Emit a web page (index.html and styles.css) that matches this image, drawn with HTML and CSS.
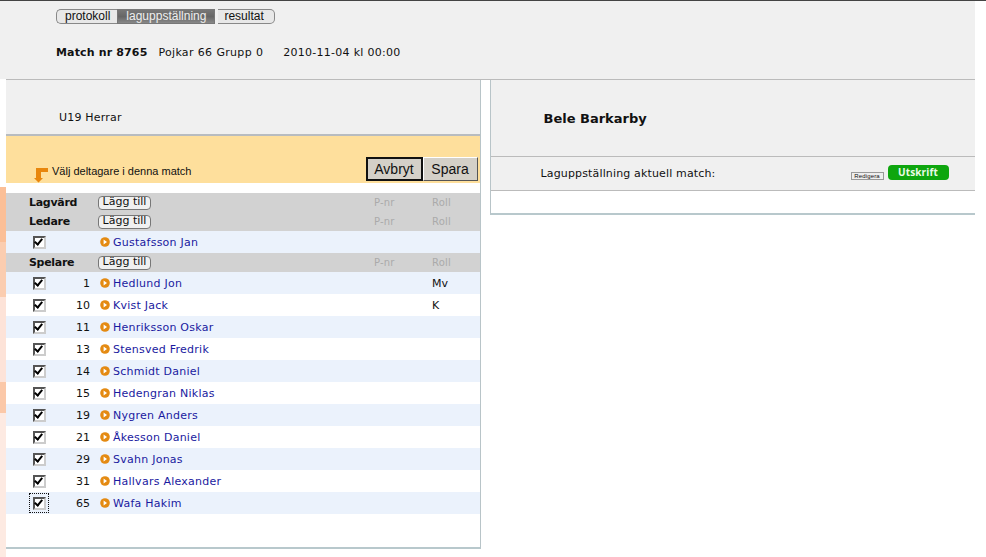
FILE: index.html
```html
<!DOCTYPE html>
<html>
<head>
    <title>Laguppställning</title>
    <link rel="stylesheet" href="styles.css">
</head>
<body>
    <div class="sidestrip">
        <div class="strip-top"></div>
        <div class="strip-gap"></div>
        <div class="strip-a"></div>
        <div class="strip-b"></div>
        <div class="strip-c"></div>
        <div class="strip-d"></div>
        <div class="strip-e"></div>
    </div>
    <div class="page">
        <div id="header">
            <div class="tabs">
                <a class="tab tab-first">protokoll</a>
                <a class="tab tab-active">laguppställning</a>
                <a class="tab tab-last">resultat</a>
            </div>
            <div class="matchinfo">
                <b>Match nr 8765</b>
                <span class="grupp">Pojkar 66 Grupp 0</span>
                <span class="datum">2010-11-04 kl 00:00</span>
            </div>
        </div>
        <div class="columns">
            <div id="leftcol">
                <div class="teamclass">U19 Herrar</div>
                <div class="yellowbar">
                    <div class="hint">
                        <svg class="arrow" width="16" height="15" viewBox="0 0 16 15">
                            <path d="M3 0H15V4H8V10H10L5.500 14.500L1 10H3z" fill="#e8860c"/>
                        </svg>
                        <span>Välj deltagare i denna match</span>
                    </div>
                    <div class="savebtns">
                        <button class="bigbtn bigbtn-focus">Avbryt</button>
                        <button class="bigbtn">Spara</button>
                    </div>
                </div>
                <div class="list">
                    <div class="row row-head">
                        <b class="rowlabel">Lagvärd</b>
                        <button class="addbtn">Lägg till</button>
                        <span class="pnr">P-nr</span><span class="roll">Roll</span>
                    </div>
                    <div class="row row-head">
                        <b class="rowlabel">Ledare</b>
                        <button class="addbtn">Lägg till</button>
                        <span class="pnr">P-nr</span><span class="roll">Roll</span>
                    </div>
                    <div class="row row-blue">
                        <span class="cb"><input type="checkbox" checked></span>
                        <span class="nr"></span>
                        <svg class="dot" width="10" height="10" viewBox="0 0 10 10"><circle cx="5" cy="5" r="4.800" fill="#e48a12"/><path d="M3.600 2.500 7 5 3.600 7.500z" fill="#fff"/></svg>
                        <a class="name">Gustafsson Jan</a>
                    </div>
                    <div class="row row-head">
                        <b class="rowlabel">Spelare</b>
                        <button class="addbtn">Lägg till</button>
                        <span class="pnr">P-nr</span><span class="roll">Roll</span>
                    </div>
                    <div id="players"></div>
                </div>
            </div>
            <div id="rightcol">
                <div class="teamname">Bele Barkarby</div>
                <div class="lineupbar">
                    <span class="lineuptitle">Laguppställning aktuell match:</span>
                    <a class="editbtn">Redigera</a>
                    <a class="printbtn">Utskrift</a>
                </div>
            </div>
        </div>
    </div>

    <script>
        var players = [
            ["1", "Hedlund Jon", "Mv"],
            ["10", "Kvist Jack", "K"],
            ["11", "Henriksson Oskar", ""],
            ["13", "Stensved Fredrik", ""],
            ["14", "Schmidt Daniel", ""],
            ["15", "Hedengran Niklas", ""],
            ["19", "Nygren Anders", ""],
            ["21", "Åkesson Daniel", ""],
            ["29", "Svahn Jonas", ""],
            ["31", "Hallvars Alexander", ""],
            ["65", "Wafa Hakim", ""]
        ];
        var dot = '<svg class="dot" width="10" height="10" viewBox="0 0 10 10"><circle cx="5" cy="5" r="4.800" fill="#e48a12"/><path d="M3.600 2.500 7 5 3.600 7.500z" fill="#fff"/></svg>';
        var html = "";
        for (var i = 0; i < players.length; i++) {
            var last = i === players.length - 1;
            html += '<div class="row ' + (i % 2 === 0 ? "row-blue" : "row-white") + '">' +
                '<span class="cb' + (last ? " cb-focus" : "") + '"><input type="checkbox" checked></span>' +
                '<span class="nr">' + players[i][0] + '</span>' + dot +
                '<a class="name">' + players[i][1] + '</a>' +
                '<span class="rollval">' + players[i][2] + '</span></div>';
        }
        document.getElementById("players").innerHTML = html;
    </script>
</body>
</html>
```

FILE: styles.css
```css
html, body {
    margin: 0;
    padding: 0;
    height: 100%;
    overflow: hidden;
}

body {
    display: flex;
    font-family: "DejaVu Sans", Verdana, sans-serif;
    font-size: 11px;
    color: #111;
    background-color: #fff;
    border-top: 1px solid #444;
    box-sizing: border-box;
}

.sidestrip {
    width: 6px;
    flex-shrink: 0;
}

.strip-top {
    height: 78px;
    background-color: #f0f0f0;
}

.strip-gap {
    height: 108px;
}

.strip-a {
    height: 55px;
    background-color: #fbbf97;
}

.strip-b {
    height: 55px;
    background-color: #fbcdb0;
}

.strip-c {
    height: 85px;
    background-color: #fde3d8;
}

.strip-d {
    height: 31px;
    background-color: #fbc8a8;
}

.strip-e {
    height: 144px;
    background-color: #fdeae2;
}

.page {
    width: 969px;
}

#header {
    background-color: #f0f0f0;
    height: 78px;
    border-bottom: 1px solid #bbb;
    padding-left: 50px;
}

.tabs {
    display: flex;
    padding-top: 8px;
    font-family: "Liberation Sans", Arial, sans-serif;
    font-size: 12px;
}

.tab {
    height: 13px;
    line-height: 13px;
    border: 1px solid #888;
    background-color: #e8e8e8;
    color: #111;
}

.tab-first {
    padding: 0 7px 0 8px;
    border-right: 0;
    border-radius: 5px 0 0 5px;
}

.tab-active {
    padding: 0 8px;
    color: #eee;
    background: linear-gradient(#777, #666 50%, #888);
    border-color: #777;
}

.tab-last {
    margin-left: 3px;
    padding: 0 10px 0 6px;
    border-left: 0;
    border-radius: 0 5px 5px 0;
}

.matchinfo {
    margin-top: 22px;
    line-height: 14px;
    display: flex;
    letter-spacing: 0.25px;
    word-spacing: 0.25px;
}

.matchinfo b {
    letter-spacing: 0.15px;
    word-spacing: 0;
}

.grupp {
    margin-left: 11px;
    letter-spacing: 0.3px;
}

.datum {
    margin-left: 20px;
}

.columns {
    display: flex;
}

#leftcol {
    width: 474px;
    height: 467px;
    border-right: 1px solid #b8c4c8;
    border-bottom: 2px solid #b8c8cc;
}

.teamclass {
    height: 54px;
    line-height: 75px;
    padding-left: 53px;
    letter-spacing: 0.2px;
    background-color: #f0f0f0;
    border-bottom: 2px solid #b8bcc0;
}

.yellowbar {
    height: 47px;
    background-color: #fedf9c;
    display: flex;
    justify-content: space-between;
    align-items: flex-end;
    padding: 0 2px 0 27px;
}

.hint {
    display: flex;
    align-items: flex-end;
    font-family: "Liberation Sans", Arial, sans-serif;
    font-size: 11px;
}

.hint span {
    margin-left: 3px;
    padding-bottom: 6px;
}

.savebtns {
    display: flex;
    margin-bottom: 2px;
}

.bigbtn {
    height: 24px;
    width: 55px;
    padding: 0;
    font-family: "Liberation Sans", Arial, sans-serif;
    font-size: 14px;
    color: #111;
    background-color: #d4d0c8;
    border: 1px solid;
    border-color: #fff #555 #555 #fff;
}

.bigbtn-focus {
    width: 57px;
    border: 2px solid #111;
    border-radius: 0;
}

.list {
    margin-top: 10px;
}

.row {
    display: flex;
    align-items: center;
    height: 22px;
}

.row-head {
    background-color: #d2d2d2;
    height: 19px;
    padding-left: 23px;
}

.row-blue {
    background-color: #ebf2fc;
}

.row-white {
    background-color: #fff;
}

.rowlabel {
    width: 69px;
    flex-shrink: 0;
    letter-spacing: -0.3px;
}

.addbtn {
    width: 53px;
    height: 14px;
    padding: 0 0 1px;
    font-family: "DejaVu Sans", Verdana, sans-serif;
    font-size: 11px;
    line-height: 10px;
    color: #111;
    background-color: #f0f0f0;
    border: 1px solid #777;
    border-radius: 4px;
}

.pnr, .roll {
    font-size: 10px;
    color: #aaa;
    letter-spacing: 0.2px;
}

.pnr {
    margin-left: 223px;
    width: 58px;
}

.cb {
    width: 20px;
    height: 20px;
    margin-left: 23px;
    display: flex;
    align-items: center;
    justify-content: center;
    box-sizing: border-box;
}

.cb input {
    appearance: none;
    margin: 0;
    width: 13px;
    height: 13px;
    box-sizing: border-box;
    background-color: #fff;
    border: 2px solid;
    border-color: #555 #ccc #ccc #555;
    position: relative;
}

.cb input::after {
    content: "";
    position: absolute;
    left: 1.5px;
    top: -0.5px;
    width: 3px;
    height: 6px;
    border: solid #000;
    border-width: 0 2px 2px 0;
    transform: rotate(40deg);
}

.cb-focus {
    outline: 1px dotted #111;
    outline-offset: -1px;
}

.nr {
    width: 41px;
    text-align: right;
    margin-right: 10px;
}

.dot {
    flex-shrink: 0;
}

.name {
    color: #1a1aa0;
    margin-left: 3px;
    width: 319px;
    flex-shrink: 0;
    white-space: nowrap;
    letter-spacing: 0.25px;
}

.rollval {
    white-space: nowrap;
}

#rightcol {
    width: 485px;
    margin-left: 9px;
    height: 133px;
    border-left: 1px solid #b8c4c8;
    border-bottom: 2px solid #b8c8cc;
}

.teamname {
    height: 76px;
    line-height: 77px;
    padding-left: 53px;
    font-size: 13px;
    font-weight: bold;
    background-color: #f0f0f0;
    border-bottom: 1px solid #bbb;
}

.lineupbar {
    height: 33px;
    background-color: #f0f0f0;
    border-bottom: 1px solid #bbb;
    display: flex;
    align-items: center;
    padding-left: 50px;
    letter-spacing: 0.15px;
}

.lineuptitle {
    width: 310px;
}

.editbtn {
    font-family: "Liberation Sans", Arial, sans-serif;
    font-size: 6px;
    line-height: 6px;
    width: 31px;
    text-align: center;
    border: 1px solid #999;
    margin-top: 4px;
    background-color: #eee;
}

.printbtn {
    margin-left: 4px;
    width: 61px;
    height: 15px;
    line-height: 14px;
    margin-bottom: 2px;
    text-align: center;
    font-family: "Open Sans", sans-serif;
    font-weight: bold;
    font-size: 10px;
    color: #eafbe6;
    background-color: #0ea60e;
    border-radius: 4px;
}
```
